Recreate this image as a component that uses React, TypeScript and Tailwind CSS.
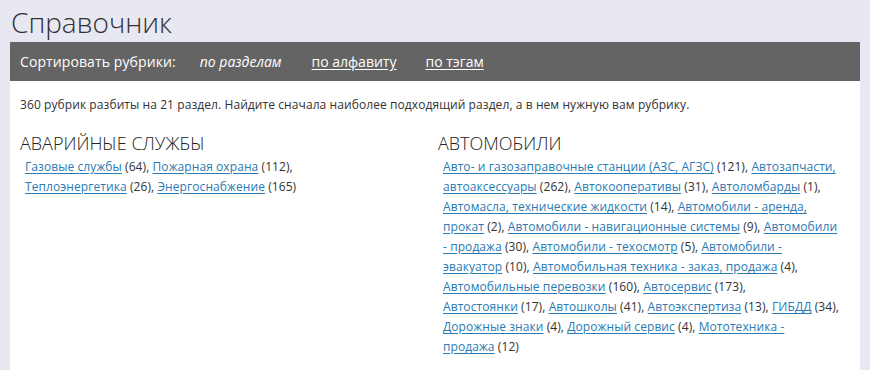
import React from "react";

type Item = { name: string; count: number };

const emergency: Item[] = [
  { name: "Газовые службы", count: 64 },
  { name: "Пожарная охрана", count: 112 },
  { name: "Теплоэнергетика", count: 26 },
  { name: "Энергоснабжение", count: 165 },
];

const cars: Item[] = [
  { name: "Авто- и газозаправочные станции (АЗС, АГЗС)", count: 121 },
  { name: "Автозапчасти, автоаксессуары", count: 262 },
  { name: "Автокооперативы", count: 31 },
  { name: "Автоломбарды", count: 1 },
  { name: "Автомасла, технические жидкости", count: 14 },
  { name: "Автомобили - аренда, прокат", count: 2 },
  { name: "Автомобили - навигационные системы", count: 9 },
  { name: "Автомобили - продажа", count: 30 },
  { name: "Автомобили - техосмотр", count: 5 },
  { name: "Автомобили - эвакуатор", count: 10 },
  { name: "Автомобильная техника - заказ, продажа", count: 4 },
  { name: "Автомобильные перевозки", count: 160 },
  { name: "Автосервис", count: 173 },
  { name: "Автостоянки", count: 17 },
  { name: "Автошколы", count: 41 },
  { name: "Автоэкспертиза", count: 13 },
  { name: "ГИБДД", count: 34 },
  { name: "Дорожные знаки", count: 4 },
  { name: "Дорожный сервис", count: 4 },
  { name: "Мототехника - продажа", count: 12 },
];

// one section: heading plus inline list of rubrics
function Section({ title, items, pr }: { title: string; items: Item[]; pr: string }) {
  return (
    <div className={"flex flex-col " + pr}>
      <h2 className="text-[18px] leading-[26px] font-light text-[#222] uppercase">{title}</h2>
      <p className="mt-[1px] pl-[5px] text-[12px] leading-[20px] tracking-[0.08px] text-[#333]">
        {items.map((it, i) => (
          <React.Fragment key={it.name}>
            <a href="#" className="text-[#2a7ab3] underline underline-offset-2">
              {it.name}
            </a>
            {"\u00a0(" + it.count + ")" + (i < items.length - 1 ? "," : "")}{" "}
          </React.Fragment>
        ))}
      </p>
    </div>
  );
}

export default function App() {
  return (
    <div
      className="min-h-screen bg-[#e8e8f2] px-[10px]"
      style={{ fontFamily: '"Open Sans", "Liberation Sans", sans-serif' }}
    >
      <h1 className="pl-[1px] pt-[3px] text-[28px] leading-[39px] font-light text-[#333]">Справочник</h1>
      <div className="flex h-[39px] items-center bg-[#646464] px-[10px] text-[14px] text-white">
        <span className="mr-[24px] tracking-[0.1px]">Сортировать рубрики:</span>
        <span className="mr-[30px] italic">по разделам</span>
        <a href="#" className="mr-[29px] underline underline-offset-2">по алфавиту</a>
        <a href="#" className="underline underline-offset-2">по тэгам</a>
      </div>
      <div className="bg-white px-[10px] pt-[15px] pb-[14px]">
        <p className="text-[12px] leading-[18px] tracking-[0.08px] text-[#333]">
          360 рубрик разбиты на 21 раздел. Найдите сначала наиболее подходящий раздел, а в нем нужную вам рубрику.
        </p>
        <div className="mt-[16px] grid grid-cols-[408px_412px] gap-x-[10px]">
          <Section title="Аварийные службы" items={emergency} pr="pr-[20px]" />
          <Section title="Автомобили" items={cars} pr="pr-[10px]" />
        </div>
      </div>
    </div>
  );
}
